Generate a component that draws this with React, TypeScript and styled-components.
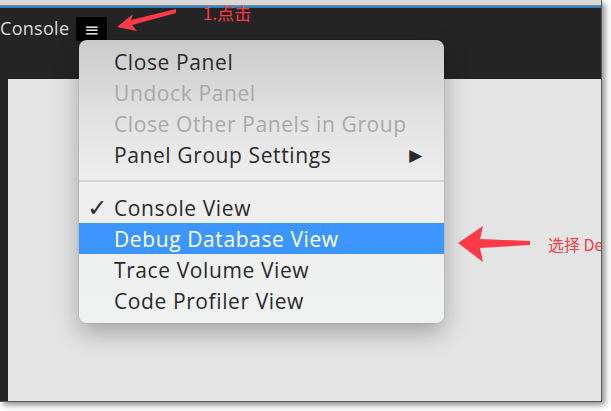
import React from "react"
import styled, { createGlobalStyle } from "styled-components"

const GlobalStyle = createGlobalStyle`
	body{
		margin: 0;
		background: #ffffff;
	}
`

const Page = styled.div`
	position: relative;
	width: 611px;
	height: 411px;
	overflow: hidden;
	font-family: "Open Sans", "Noto Sans", "Noto Sans CJK SC", sans-serif;
`

const Frame = styled.div`
	position: relative;
	box-sizing: border-box;
	width: 602px;
	height: 402px;
	display: flex;
	flex-flow: column;
	overflow: hidden;
	border-right: 1px solid #5a5a5a;
	border-bottom: 1px solid #5a5a5a;
	box-shadow: 3px 3px 6px rgba(0, 0, 0, 0.45);
`

const TopStrip = styled.div`
	height: 5px;
	background: #d8d8d8;
	border-bottom: 1px solid #8a8a8a;
`

const BlueLine = styled.div`
	height: 2px;
	background: #2e84bd;
`

const Header = styled.div`
	height: 71px;
	display: flex;
	align-items: flex-start;
	gap: 7px;
	padding-top: 9px;
	box-sizing: border-box;
	background: #242424;
`

const PanelTitle = styled.span`
	font-size: 18px;
	line-height: 22px;
	color: #dcdcdc;
	letter-spacing: 0.3px;
`

const MenuButton = styled.div`
	width: 31px;
	height: 24px;
	display: flex;
	align-items: center;
	justify-content: center;
	background: #000000;
	color: #e8e8e8;
	font-size: 18px;
	font-family: "DejaVu Sans", sans-serif;
`

const Body = styled.div`
	flex: 1;
	display: flex;
`

const LeftStrip = styled.div`
	width: 8px;
	background: #242424;
`

const Content = styled.div`
	flex: 1;
	background: #e4e4e4;
`

const Menu = styled.div`
	position: absolute;
	left: 79px;
	top: 40px;
	width: 365px;
	padding: 6px 0 7px;
	border-radius: 8px;
	background: linear-gradient(180deg, #cbcbcb 0%, #e4e4e4 30%, #eeeeee 50%, #f0f1f1 100%);
	box-shadow: 0 10px 24px rgba(0, 0, 0, 0.28), 0 0 0 1px rgba(0, 0, 0, 0.06);
	font-size: 21px;
`

const Item = styled.div<{ $disabled?: boolean; $active?: boolean }>`
	display: grid;
	grid-template-columns: 35px 1fr auto;
	align-items: center;
	height: 31px;
	padding-right: 21px;
	color: ${(p) => (p.$active ? "#ffffff" : p.$disabled ? "#a9a9a9" : "#2a2a2a")};
	background: ${(p) => (p.$active ? "#3d95fe" : "transparent")};
	white-space: nowrap;
	letter-spacing: 0.6px;
`

const Check = styled.span`
	justify-self: end;
	padding-right: 6px;
	font-size: 24px;
	font-weight: bold;
	font-family: "DejaVu Sans", sans-serif;
`

const SubArrow = styled.span`
	font-size: 17px;
	font-family: "DejaVu Sans", sans-serif;
	color: #2a2a2a;
`

const Separator = styled.div`
	height: 22px;
	display: flex;
	align-items: center;
	&::after {
		content: "";
		flex: 1;
		height: 2px;
		background: #d4d4d4;
	}
`

const Note = styled.span<{ $x: number; $y: number; $size: number }>`
	position: absolute;
	left: ${(p) => p.$x}px;
	top: ${(p) => p.$y}px;
	font-size: ${(p) => p.$size}px;
	line-height: 1;
	color: #ff3a48;
	white-space: nowrap;
	font-family: "Noto Sans CJK SC", "Noto Sans", sans-serif;
`

const ArrowSvg = styled.svg<{ $x: number; $y: number }>`
	position: absolute;
	left: ${(p) => p.$x}px;
	top: ${(p) => p.$y}px;
`

type Entry =
	| { kind: "item"; label: string; disabled?: boolean; checked?: boolean; active?: boolean; sub?: boolean }
	| { kind: "sep" }

const entries: Entry[] = [
	{ kind: "item", label: "Close Panel" },
	{ kind: "item", label: "Undock Panel", disabled: true },
	{ kind: "item", label: "Close Other Panels in Group", disabled: true },
	{ kind: "item", label: "Panel Group Settings", sub: true },
	{ kind: "sep" },
	{ kind: "item", label: "Console View", checked: true },
	{ kind: "item", label: "Debug Database View", active: true },
	{ kind: "item", label: "Trace Volume View" },
	{ kind: "item", label: "Code Profiler View" },
]

export default function App() {
	return (
		<>
			<GlobalStyle />
			<Page>
				<Frame>
					<TopStrip />
					<BlueLine />
					<Header>
						<PanelTitle>Console</PanelTitle>
						<MenuButton>≡</MenuButton>
					</Header>
					<Body>
						<LeftStrip />
						<Content />
					</Body>

					<Menu>
						{entries.map((e, i) =>
							e.kind === "sep" ? (
								<Separator key={i} />
							) : (
								<Item key={i} $disabled={e.disabled} $active={e.active}>
									<Check>{e.checked ? "✓" : ""}</Check>
									<span>{e.label}</span>
									{e.sub ? <SubArrow>▶</SubArrow> : <span />}
								</Item>
							)
						)}
					</Menu>

					{/* annotation 1 */}
					<ArrowSvg $x={114} $y={6} width="64" height="26" viewBox="0 0 64 26">
						<path d="M3 21 L19 8 L17 14 L62 3 L62 7 L18 19 L23 25 Z" fill="#ff3a48" />
					</ArrowSvg>
					<Note $x={203} $y={4} $size={17}>1.点击</Note>

					{/* annotation 2 */}
					<ArrowSvg $x={456} $y={224} width="76" height="40" viewBox="0 0 76 40">
						<path d="M2 19 L27 2 L24 15 L74 17 L74 21 L24 24 L27 38 Z" fill="#ff3a48" />
					</ArrowSvg>
					<Note $x={548} $y={236} $size={16}>选择 Debug</Note>
				</Frame>
			</Page>
		</>
	)
}
